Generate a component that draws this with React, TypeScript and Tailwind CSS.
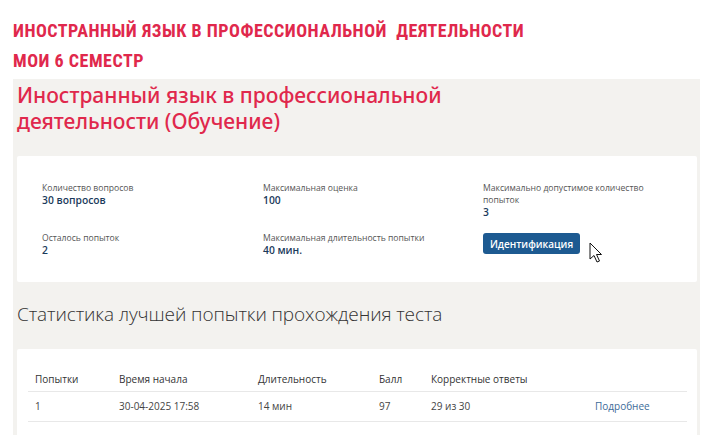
export default function App() {
  const info = [
    { label: "Количество вопросов", value: "30 вопросов" },
    { label: "Максимальная оценка", value: "100" },
    { label: "Максимально допустимое количество попыток", value: "3" },
    { label: "Осталось попыток", value: "2" },
    { label: "Максимальная длительность попытки", value: "40 мин." },
  ];

  return (
    <div className="w-[705px] h-[445px] overflow-hidden bg-white" style={{ fontFamily: '"Open Sans", sans-serif' }}>
      <div className="pl-[13px] pt-[22px] text-[#e0284c] font-bold uppercase leading-none" style={{ fontFamily: '"Roboto Condensed", "Liberation Sans", sans-serif' }}>
        <div className="text-[18px] tracking-[0.5px]">Иностранный язык в профессиональной&nbsp; деятельности</div>
        <div className="text-[18px] mt-[12px] tracking-[0.5px]">Мои 6 семестр</div>
      </div>

      <div className="ml-[13px] mr-[5px] mt-[9px] h-[356px] bg-[#f3f2ef] pl-[4px] pr-[3px]">
        <h1 className="pt-[3px] text-[21px] leading-[26px] font-medium text-[#e0284c] w-[440px]" style={{ fontFamily: '"Noto Sans", sans-serif' }}>
          Иностранный язык в профессиональной деятельности (Обучение)
        </h1>

        <div className="relative mt-[22px] h-[126px] bg-white rounded-[2px] pl-[25px] pt-[26px]">
          <div className="grid grid-cols-[221px_220px_1fr] gap-y-[14px] text-[8.6px] leading-[12px]">
            {info.map((it, i) => (
              <div key={i} className="w-[190px]">
                <div className="text-[#555]">{it.label}</div>
                <div className="font-semibold text-[#1b3a5c] text-[10.3px]">{it.value}</div>
              </div>
            ))}
            <div>
              <button className="mt-[1px] h-[21px] w-[97px] rounded-[3px] bg-[#1d5a91] text-white text-[10px] font-semibold">
                Идентификация
              </button>
            </div>
          </div>
          <svg className="absolute left-[572px] top-[86px]" width="14" height="22" viewBox="0 0 14 22">
            <path d="M1 1 L1 17 L5 13.5 L8 20 L10.5 19 L7.5 12.5 L12.5 12.5 Z" fill="white" stroke="#111" strokeWidth="1" strokeLinejoin="round" />
          </svg>
        </div>

        <h2 className="mt-[19px] text-[19px] leading-[26px] font-light tracking-[-0.1px] text-[#333]">
          Статистика лучшей попытки прохождения теста
        </h2>

        <div className="mt-[22px] h-[88px] bg-white rounded-[2px] px-[11px] pt-[23px]">
          <div className="w-[659px] text-[10px]">
            <div className="flex h-[20px] items-start border-b border-[#e8e8e8] text-[#333]">
              <div className="w-[91px] pl-[7px]">Попытки</div>
              <div className="w-[139px]">Время начала</div>
              <div className="w-[121px]">Длительность</div>
              <div className="w-[52px]">Балл</div>
              <div className="w-[164px]">Корректные ответы</div>
              <div className="flex-1"></div>
            </div>
            <div className="flex h-[30px] items-center border-b border-[#e8e8e8] text-[#444]">
              <div className="w-[91px] pl-[7px]">1</div>
              <div className="w-[139px]">30-04-2025 17:58</div>
              <div className="w-[121px]">14 мин</div>
              <div className="w-[52px]">97</div>
              <div className="w-[164px]">29 из 30</div>
              <div className="flex-1 text-[#3d6b99]">Подробнее</div>
            </div>
          </div>
        </div>
      </div>
    </div>
  );
}
